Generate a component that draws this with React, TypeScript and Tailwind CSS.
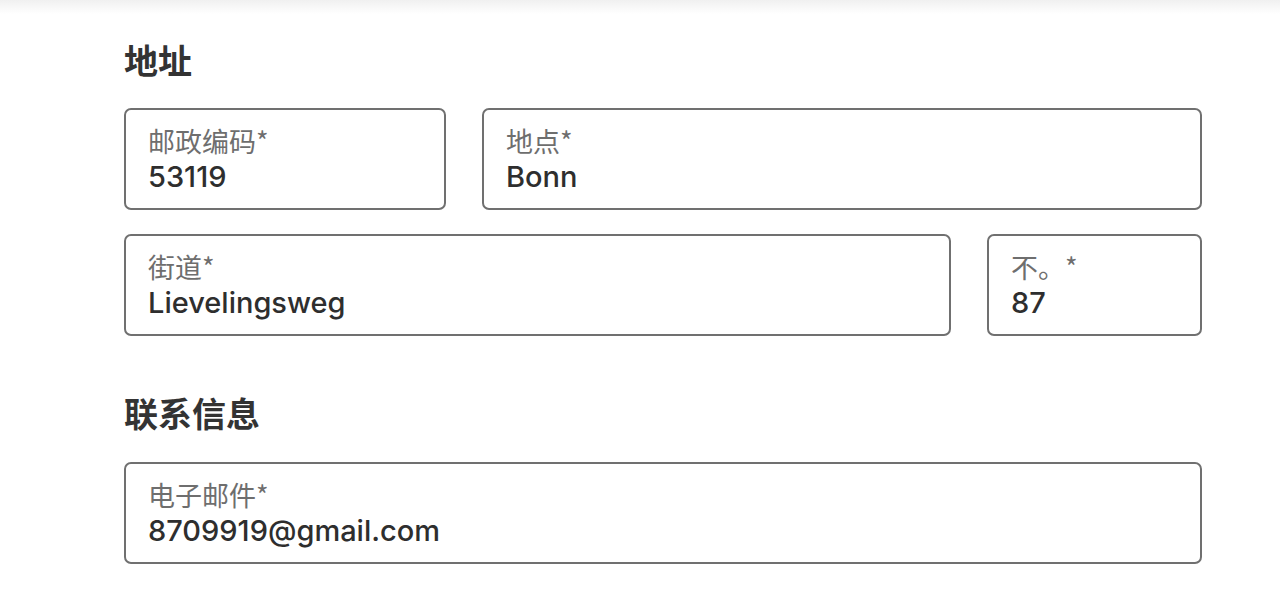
import React from "react";

const latin = "font-['Inter','Noto_Sans_CJK_SC',sans-serif]";

function Field({ label, value, className }: { label: string; value: string; className: string }) {
  return (
    <div
      className={`${className} h-[102px] rounded-[7px] border-2 border-[#707070] bg-white pl-[22px] pt-[14px]`}
    >
      <div className="text-[27px] leading-[34px] text-[#6e6e6e] font-['Noto_Sans_CJK_SC','Inter',sans-serif]">
        {label}
      </div>
      <div className={`text-[29px] leading-[37px] font-medium text-[#2e2e2e] ${latin}`}>{value}</div>
    </div>
  );
}

export default function App() {
  return (
    <div className="w-[1280px] h-[608px] bg-white overflow-hidden">
      <div className="h-[14px] bg-gradient-to-b from-[#f0f0f0] to-white" />
      <div className="pl-[124px] w-[1202px]">
        <h2 className="mt-[26px] h-[40px] text-[34px] leading-[40px] font-bold text-[#333333] font-['Noto_Sans_CJK_SC',sans-serif]">
          地址
        </h2>
        <div className="mt-[28px] flex gap-[36px]">
          <Field className="w-[322px]" label="邮政编码*" value="53119" />
          <Field className="w-[720px]" label="地点*" value="Bonn" />
        </div>
        <div className="mt-[24px] flex gap-[36px]">
          <Field className="w-[827px]" label="街道*" value="Lievelingsweg" />
          <Field className="w-[215px]" label="不。*" value="87" />
        </div>
        <h2 className="mt-[57px] h-[40px] text-[34px] leading-[40px] font-bold text-[#333333] font-['Noto_Sans_CJK_SC',sans-serif]">
          联系信息
        </h2>
        <div className="mt-[29px] flex">
          <Field className="w-[1078px]" label="电子邮件*" value="8709919@gmail.com" />
        </div>
      </div>
    </div>
  );
}
